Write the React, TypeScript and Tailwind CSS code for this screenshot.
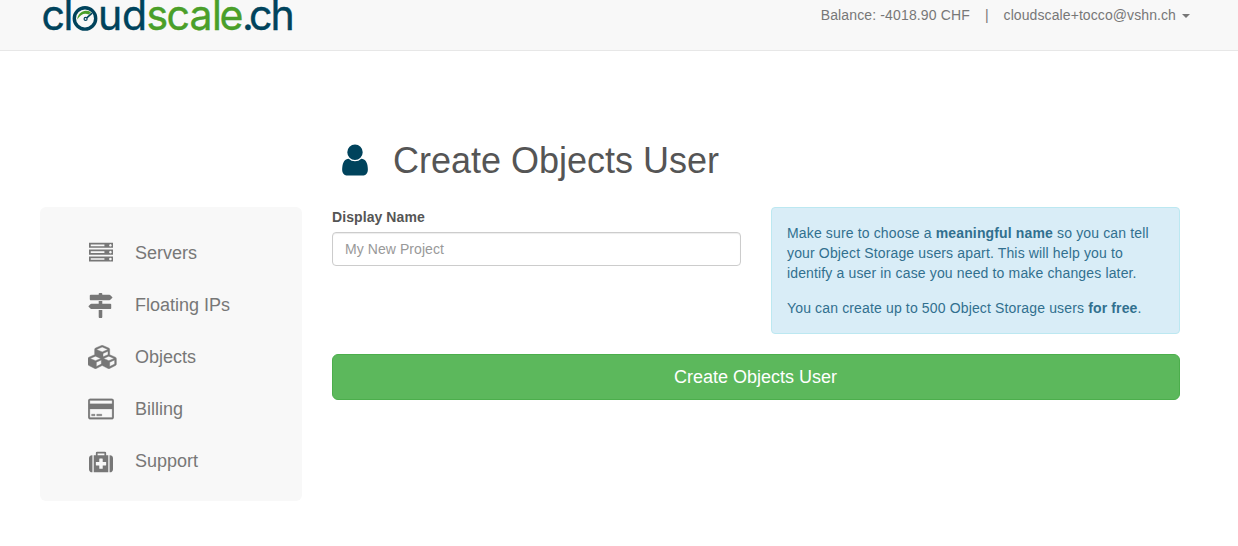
import React from 'react';

type Glyph = { viewBox: string; path: string; className: string };

const icons: Record<string, Glyph> = {
  server: {
    viewBox: '0 0 1792 1792',
    className: 'ml-px h-6 w-6',
    path: 'M128 1408h1024v-128h-1024v128zm0-512h1024v-128h-1024v128zm1568 448q0-40-28-68t-68-28-68 28-28 68 28 68 68 28 68-28 28-68zm-1568-960h1024v-128h-1024v128zm1568 448q0-40-28-68t-68-28-68 28-28 68 28 68 68 28 68-28 28-68zm0-512q0-40-28-68t-68-28-68 28-28 68 28 68 68 28 68-28 28-68zm96 832v384h-1792v-384h1792zm0-512v384h-1792v-384h1792zm0-512v384h-1792v-384h1792z',
  },
  signs: {
    viewBox: '0 0 1792 1792',
    className: 'h-[25px] w-[25px]',
    path: 'M1745 297q10 10 10 23t-10 23l-141 141q-28 28-68 28h-1344q-26 0-45-19t-19-45v-256q0-26 19-45t45-19h576v-64q0-26 19-45t45-19h128q26 0 45 19t19 45v64h512q40 0 68 28zm-977 919h256v512q0 26-19 45t-45 19h-128q-26 0-45-19t-19-45v-512zm832-448q26 0 45 19t19 45v256q0 26-19 45t-45 19h-1344q-40 0-68-28l-141-141q-10-10-10-23t10-23l141-141q28-28 68-28h512v-192h256v192h576z',
  },
  cubes: {
    viewBox: '0 0 2304 1792',
    className: 'h-6 w-[30px] stroke-current stroke-[35px]',
    path: 'M640 1632l384-192v-314l-384 164v342zm-64-454l404-173-404-173-404 173zm1088 454l384-192v-314l-384 164v342zm-64-454l404-173-404-173-404 173zm-448-293l384-165v-266l-384 164v267zm-64-379l441-189-441-189-441 189zm1088 518v416q0 36-19 67t-52 47l-448 224q-25 14-57 14t-57-14l-448-224q-4-2-7-4-2 2-7 4l-448 224q-25 14-57 14t-57-14l-448-224q-33-16-52-47t-19-67v-416q0-38 21.5-70t56.5-48l434-186v-400q0-38 21.5-70t56.5-48l448-192q23-10 50-10t50 10l448 192q35 16 56.5 48t21.5 70v400l434 186q36 16 57 48t21 70z',
  },
  card: {
    viewBox: '0 0 1920 1792',
    className: 'h-6 w-[26px] stroke-current stroke-[20px]',
    path: 'M1760 128q66 0 113 47t47 113v1216q0 66-47 113t-113 47h-1600q-66 0-113-47t-47-113v-1216q0-66 47-113t113-47h1600zm-1600 128q-13 0-22.5 9.5t-9.5 22.5v224h1664v-224q0-13-9.5-22.5t-22.5-9.5h-1600zm1600 1280q13 0 22.5-9.5t9.5-22.5v-608h-1664v608q0 13 9.5 22.5t22.5 9.5h1600zm-1504-128v-128h256v128h-256zm384 0v-128h384v128h-384z',
  },
  medkit: {
    viewBox: '0 0 1792 1792',
    className: 'ml-px mt-px h-6 w-6',
    path: 'M1280 1120v-192q0-14-9-23t-23-9h-224v-224q0-14-9-23t-23-9h-192q-14 0-23 9t-9 23v224h-224q-14 0-23 9t-9 23v192q0 14 9 23t23 9h224v224q0 14 9 23t23 9h192q14 0 23-9t9-23v-224h224q14 0 23-9t9-23zm-640-736h512v-128h-512v128zM256 384v1280h-32q-92 0-158-66t-66-158v-832q0-92 66-158t158-66h32zM1440 384v1280h-1088v-1280h160v-160q0-40 28-68t68-28h576q40 0 68 28t28 68v160h160zM1792 608v832q0 92-66 158t-158 66h-32v-1280h32q92 0 158 66t66 158z',
  },
  user: {
    viewBox: '256 0 1280 1792',
    className: 'h-9 w-[26px]',
    path: 'M1536 1399q0 109-62.5 187t-150.5 78h-854q-88 0-150.5-78t-62.5-187q0-85 8.5-160.5t31.5-152 58.5-131 94-89 134.5-34.5q131 128 313 128t313-128q76 0 134.5 34.5t94 89 58.5 131 31.5 152 8.5 160.5zm-256-887q0 159-112.5 271.5t-271.5 112.5-271.5-112.5-112.5-271.5 112.5-271.5 271.5-112.5 271.5 112.5 112.5 271.5z',
  },
};

function Icon({ name }: { name: string }) {
  const { viewBox, path, className } = icons[name];
  return (
    <svg viewBox={viewBox} className={className} fill="currentColor" fillRule="evenodd" aria-hidden="true">
      <path d={path} />
    </svg>
  );
}

function Logo() {
  return (
    <svg width="256" height="36" viewBox="40 0 256 36" fontFamily="Inter, sans-serif" fontSize="41" aria-label="cloudscale.ch">
      <g fill="#00435c" stroke="#00435c" strokeWidth="0.4">
        <text x="41.500 63.500" y="30.300">cl</text>
        <text x="98 122" y="30.300">ud</text>
        <text x="242 249 270.500" y="30.300">.ch</text>
      </g>
      <text x="146.500 166.500 189.500 212 219.500" y="30.300" fill="#4a9f29" stroke="#4a9f29" strokeWidth="0.4">scale</text>
      <circle cx="85" cy="18.4" r="10.7" fill="none" stroke="#00435c" strokeWidth="3.4" />
      <path d="M77.300 19.500C77.800 12.500 84.500 8.500 91 12.200L88.800 14.600C84.500 12.600 80.500 14.500 77.300 19.500z" fill="#4a9f29" />
      <path d="M92 13.200l-5.200 4.600" stroke="#00435c" strokeWidth="1.600" />
      <circle cx="85.600" cy="18.900" r="1.500" fill="none" stroke="#00435c" strokeWidth="1.200" />
    </svg>
  );
}

const nav = [
  { icon: 'server', label: 'Servers' },
  { icon: 'signs', label: 'Floating IPs' },
  { icon: 'cubes', label: 'Objects' },
  { icon: 'card', label: 'Billing' },
  { icon: 'medkit', label: 'Support' },
];

export default function App() {
  return (
    <div className="h-[546px] overflow-hidden bg-white font-['Liberation_Sans',Arial,sans-serif] text-sm leading-5 text-[#555]">
      <header className="flex h-[51px] items-start justify-between border-b border-[#e7e7e7] bg-[#f8f8f8] pr-12 pl-10 text-[#777]">
        <Logo />
        <div className="flex pt-[5px]">
          <span className="tracking-[0.14px]">Balance: -4018.90 CHF</span>
          <span className="mx-[15px]">|</span>
          <button className="flex items-center gap-1.5 tracking-[0.09px]">
            cloudscale+tocco@vshn.ch
            <span className="mt-px border-x-4 border-t-4 border-x-transparent border-t-[#777]" />
          </button>
        </div>
      </header>

      <div className="grid grid-cols-[262px_848px] gap-x-[30px] pt-[85px] pl-10">
        <h1 className="col-start-2 flex h-[71px] items-start pt-[5px] pl-2.5 text-4xl leading-10">
          <span className="mt-px mr-[25px] text-[#00435c]"><Icon name="user" /></span>
          Create Objects User
        </h1>

        <nav className="col-start-1 h-[294px] rounded-md bg-[#f8f8f8] pt-5 text-lg text-[#777]">
          {nav.map(({ icon, label }) => (
            <a key={label} className="flex h-[52px] items-center pl-12">
              <span className="flex w-[47px]"><Icon name={icon} /></span>
              {label}
            </a>
          ))}
        </nav>

        <main>
          <div className="grid grid-cols-2 gap-[30px]">
            <label className="block font-bold tracking-[0.08px]">
              Display Name
              <input
                placeholder="My New Project"
                className="mt-[5px] block h-[34px] w-full rounded border border-[#ccc] bg-white px-3 font-normal tracking-[0.07px] shadow-[inset_0_1px_1px_rgba(0,0,0,0.075)] placeholder:text-[#999]"
              />
            </label>
            <div className="h-[127px] rounded border border-[#bce8f1] bg-[#d9edf7] p-[15px] tracking-[0.145px] text-[#31708f]">
              <p className="mb-[15px]">
                Make sure to choose a <b>meaningful name</b> so you can tell your Object Storage users apart. This will help you to identify a user in case you need to make changes later.
              </p>
              <p>You can create up to 500 Object Storage users <b>for free</b>.</p>
            </div>
          </div>
          <button className="mt-5 block h-[46px] w-full rounded-md border border-[#4cae4c] bg-[#5cb85c] pr-px text-lg text-white">
            Create Objects User
          </button>
        </main>
      </div>
    </div>
  );
}
